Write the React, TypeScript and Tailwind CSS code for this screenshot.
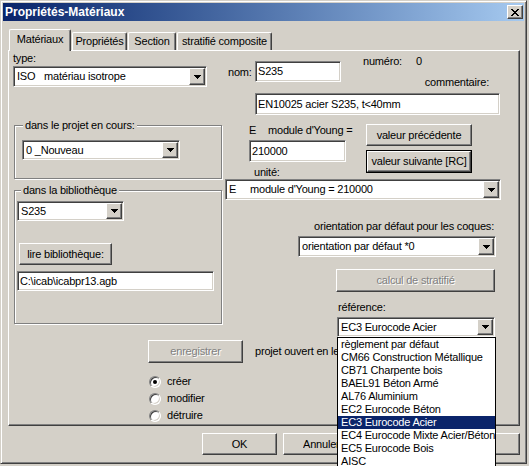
import React from "react";

const raised =
  "border border-t-white border-l-white border-r-[#404040] border-b-[#404040] shadow-[inset_-1px_-1px_#808080] bg-[#d4d0c8]";
const sunken =
  "border border-t-[#808080] border-l-[#808080] border-r-white border-b-white shadow-[inset_1px_1px_#404040,inset_-1px_-1px_#d4d0c8] bg-white";
const disabledText = "text-[#808080] [text-shadow:1px_1px_0_#fff]";

function Arrow() {
  return (
    <svg width="7" height="4" viewBox="0 0 7 4" shapeRendering="crispEdges">
      <path d="M0 0h7v1h-1v1h-1v1h-1v1h-1v-1h-1v-1h-1v-1h-1z" fill="#000" />
    </svg>
  );
}

function Combo({ cls, children }: { cls: string; children: React.ReactNode }) {
  return (
    <div className={`${sunken} flex items-stretch p-[1px] ${cls}`}>
      <div className="flex-1 flex items-center pl-[2px] whitespace-pre overflow-hidden">{children}</div>
      <div className={`${raised} w-[16px] flex items-center justify-center`}>
        <Arrow />
      </div>
    </div>
  );
}

function Field({ cls, children }: { cls: string; children: React.ReactNode }) {
  return <div className={`${sunken} flex items-center pl-[2px] whitespace-pre overflow-hidden ${cls}`}>{children}</div>;
}

function Btn({ cls, children, disabled }: { cls: string; children?: React.ReactNode; disabled?: boolean }) {
  return (
    <div className={`${raised} flex items-center justify-center whitespace-nowrap ${disabled ? disabledText : ""} ${cls}`}>
      {children}
    </div>
  );
}

function Group({ cls, label, labelCls, children }: { cls: string; label: string; labelCls: string; children: React.ReactNode }) {
  return (
    <div className={`border border-[#808080] shadow-[1px_1px_#fff,inset_1px_1px_#fff] flex flex-col items-start ${cls}`}>
      <div className={`-mt-[7px] h-[13px] px-[2px] bg-[#d4d0c8] whitespace-nowrap ${labelCls}`}>{label}</div>
      {children}
    </div>
  );
}

function Radio({ checked }: { checked?: boolean }) {
  return (
    <div className="w-[12px] h-[12px] rounded-full border border-t-[#808080] border-l-[#808080] border-r-white border-b-white shadow-[inset_1px_1px_#404040,inset_-1px_-1px_#d4d0c8] bg-white flex items-center justify-center">
      {checked && <div className="w-[4px] h-[4px] rounded-full bg-black" />}
    </div>
  );
}

const items = [
  "règlement par défaut",
  "CM66 Construction Métallique",
  "CB71 Charpente bois",
  "BAEL91 Béton Armé",
  "AL76 Aluminium",
  "EC2 Eurocode Béton",
  "EC3 Eurocode Acier",
  "EC4 Eurocode Mixte Acier/Béton",
  "EC5 Eurocode Bois",
  "AISC",
];

export default function App() {
  return (
    <div className="w-[529px] h-[466px] overflow-hidden bg-[#d4d0c8] font-['Liberation_Sans',Arial,sans-serif] text-[11px] leading-[13px] tracking-[-0.2px] text-black">
      <div className="w-[527px] h-[464px] border border-t-[#d4d0c8] border-l-[#d4d0c8] border-r-[#404040] border-b-[#404040] shadow-[inset_1px_1px_#fff,inset_-1px_-1px_#808080] p-[2px] flex flex-col">
        {/* title bar */}
        <div className="h-[18px] flex items-center bg-linear-to-r from-[#0a246a] to-[#a6caf0] pl-[2px] pr-[1px]">
          <div className="flex-1 text-white font-bold text-[12px] tracking-normal">Propriétés-Matériaux</div>
          <div className={`${raised} w-[16px] h-[14px] flex items-center justify-center`}>
            <svg width="8" height="7" viewBox="0 0 8 7" shapeRendering="crispEdges">
              <path
                d="M0 0h2v1h1v1h2v-1h1v-1h2v1h-1v1h-1v1h-1v1h1v1h1v1h1v1h-2v-1h-1v-1h-2v1h-1v1h-2v-1h1v-1h1v-1h1v-1h-1v-1h-1v-1h-1z"
                fill="#000"
              />
            </svg>
          </div>
        </div>

        {/* tabs */}
        <div className="mt-[8px] ml-[6px] h-[21px] flex items-end">
          <div className="relative z-10 -mb-[1px] h-[22px] w-[62px] bg-[#d4d0c8] border-t border-l border-r border-t-white border-l-white border-r-[#404040] shadow-[inset_-1px_0_#808080] rounded-t-[2px] flex items-center justify-center pb-[2px]">
            Matériaux
          </div>
          <div className="ml-[1px] h-[18px] w-[55px] border-t border-l border-r border-t-white border-l-white border-r-[#404040] shadow-[inset_-1px_0_#808080] rounded-t-[2px] flex items-center justify-center">
            Propriétés
          </div>
          <div className="ml-[1px] h-[18px] w-[48px] border-t border-l border-r border-t-white border-l-white border-r-[#404040] shadow-[inset_-1px_0_#808080] rounded-t-[2px] flex items-center justify-center">
            Section
          </div>
          <div className="ml-[1px] h-[18px] w-[95px] border-t border-l border-r border-t-white border-l-white border-r-[#404040] shadow-[inset_-1px_0_#808080] rounded-t-[2px] flex items-center justify-center whitespace-nowrap">
            stratifié composite
          </div>
        </div>

        {/* panel */}
        <div className="ml-[5px] w-[512px] h-[376px] border border-t-white border-l-white border-r-[#404040] border-b-[#404040] shadow-[inset_-1px_-1px_#808080] pl-[4px] pt-[1px] flex flex-col">
          <div className="flex items-start">
            {/* left column */}
            <div className="w-[212px] flex flex-col items-start">
              <div className="h-[13px]">type:</div>
              <Combo cls="mt-[1px] w-[194px] h-[21px]">
                <span className="w-[27px]">ISO</span>
                <span>matériau isotrope</span>
              </Combo>
              <Group cls="mt-[38px] ml-[1px] w-[208px] pb-[18px]" label="dans le projet en cours:" labelCls="ml-[8px]">
                <Combo cls="mt-[8px] ml-[7px] w-[158px] h-[20px]">0 _Nouveau</Combo>
              </Group>
              <Group cls="mt-[11px] ml-[1px] w-[208px] pb-[32px]" label="dans la bibliothèque" labelCls="ml-[6px]">
                <Combo cls="mt-[4px] ml-[2px] w-[107px] h-[20px]">S235</Combo>
                <Btn cls="mt-[22px] ml-[4px] w-[93px] h-[22px]">lire bibliothèque:</Btn>
                <Field cls="mt-[6px] ml-[2px] w-[197px] h-[20px]">C:\icab\icabpr13.agb</Field>
              </Group>
            </div>

            {/* right column */}
            <div className="w-[276px] flex flex-col items-start">
              <div className="mt-[3px] flex items-start">
                <div className="ml-[3px] mt-[11px] w-[27px]">nom:</div>
                <Field cls="mt-[6px] w-[86px] h-[21px]">S235</Field>
                <div className="ml-[22px] w-[126px] flex flex-col">
                  <div className="flex">
                    <span>numéro:</span>
                    <span className="ml-[14px]">0</span>
                  </div>
                  <div className="mt-[8px] text-right">commentaire:</div>
                </div>
              </div>
              <Field cls="mt-[4px] ml-[30px] w-[245px] h-[22px]">EN10025 acier S235, t&lt;40mm</Field>
              <div className="flex items-start">
                <div className="ml-[24px] w-[97px] flex flex-col items-start">
                  <div className="mt-[9px] flex whitespace-nowrap">
                    <span className="w-[19px]">E</span>
                    <span>module d'Young =</span>
                  </div>
                  <Field cls="mt-[3px] w-[97px] h-[22px]">210000</Field>
                  <div className="mt-[4px] ml-[5px]">unité:</div>
                </div>
                <div className="ml-[20px] flex flex-col">
                  <Btn cls="mt-[9px] w-[106px] h-[22px]">valeur précédente</Btn>
                  <div className="mt-[4px] w-[106px] h-[23px] border border-black">
                    <Btn cls="w-full h-full">valeur suivante [RC]</Btn>
                  </div>
                </div>
              </div>
              <Combo cls="w-[276px] h-[21px]">
                <span className="w-[21px]">E</span>
                <span>module d'Young = 210000</span>
              </Combo>
              <div className="mt-[20px] w-[276px] pr-[7px] text-right whitespace-nowrap">
                orientation par défaut pour les coques:
              </div>
              <Combo cls="mt-[3px] ml-[73px] w-[198px] h-[21px]">orientation par défaut *0</Combo>
              <Btn disabled cls="mt-[12px] ml-[111px] w-[159px] h-[23px]">
                calcul de stratifié
              </Btn>
              <div className="mt-[9px] ml-[113px]">référence:</div>
              <div className="relative mt-[3px] ml-[112px]">
                <Combo cls="w-[158px] h-[20px]">EC3 Eurocode Acier</Combo>
                <div className="absolute left-0 top-full z-20 w-[159px] border border-black bg-white">
                  {items.map((t, i) => (
                    <div
                      key={t}
                      className={`h-[13px] leading-[13px] pl-[3px] whitespace-nowrap overflow-hidden ${
                        i === 6 ? "bg-[#0a246a] text-white" : ""
                      }`}
                    >
                      {t}
                    </div>
                  ))}
                </div>
              </div>
            </div>
          </div>

          {/* bottom area */}
          <div className="mt-[3px] ml-[135px] flex items-center">
            <Btn disabled cls="w-[95px] h-[23px]">
              enregistrer
            </Btn>
            <div className="ml-[12px] w-[82px] overflow-hidden whitespace-nowrap">projet ouvert en lecture seule</div>
          </div>
          <div className="mt-[10px] ml-[136px] flex flex-col">
            <div className="h-[17px] flex items-center">
              <Radio checked />
              <span className="ml-[6px]">créer</span>
            </div>
            <div className="h-[17px] flex items-center">
              <Radio />
              <span className="ml-[6px]">modifier</span>
            </div>
            <div className="h-[17px] flex items-center">
              <Radio />
              <span className="ml-[6px]">détruire</span>
            </div>
          </div>
        </div>

        {/* dialog buttons */}
        <div className="mt-[7px] pr-[4px] flex justify-end gap-[6px]">
          <Btn cls="w-[75px] h-[22px]">OK</Btn>
          <Btn cls="w-[75px] h-[22px] justify-start pl-[19px] overflow-hidden">
            <span className="w-[35px] overflow-hidden">Annuler</span>
          </Btn>
          <Btn cls="w-[75px] h-[22px]" />
          <Btn cls="w-[75px] h-[22px]" />
        </div>
      </div>
    </div>
  );
}
